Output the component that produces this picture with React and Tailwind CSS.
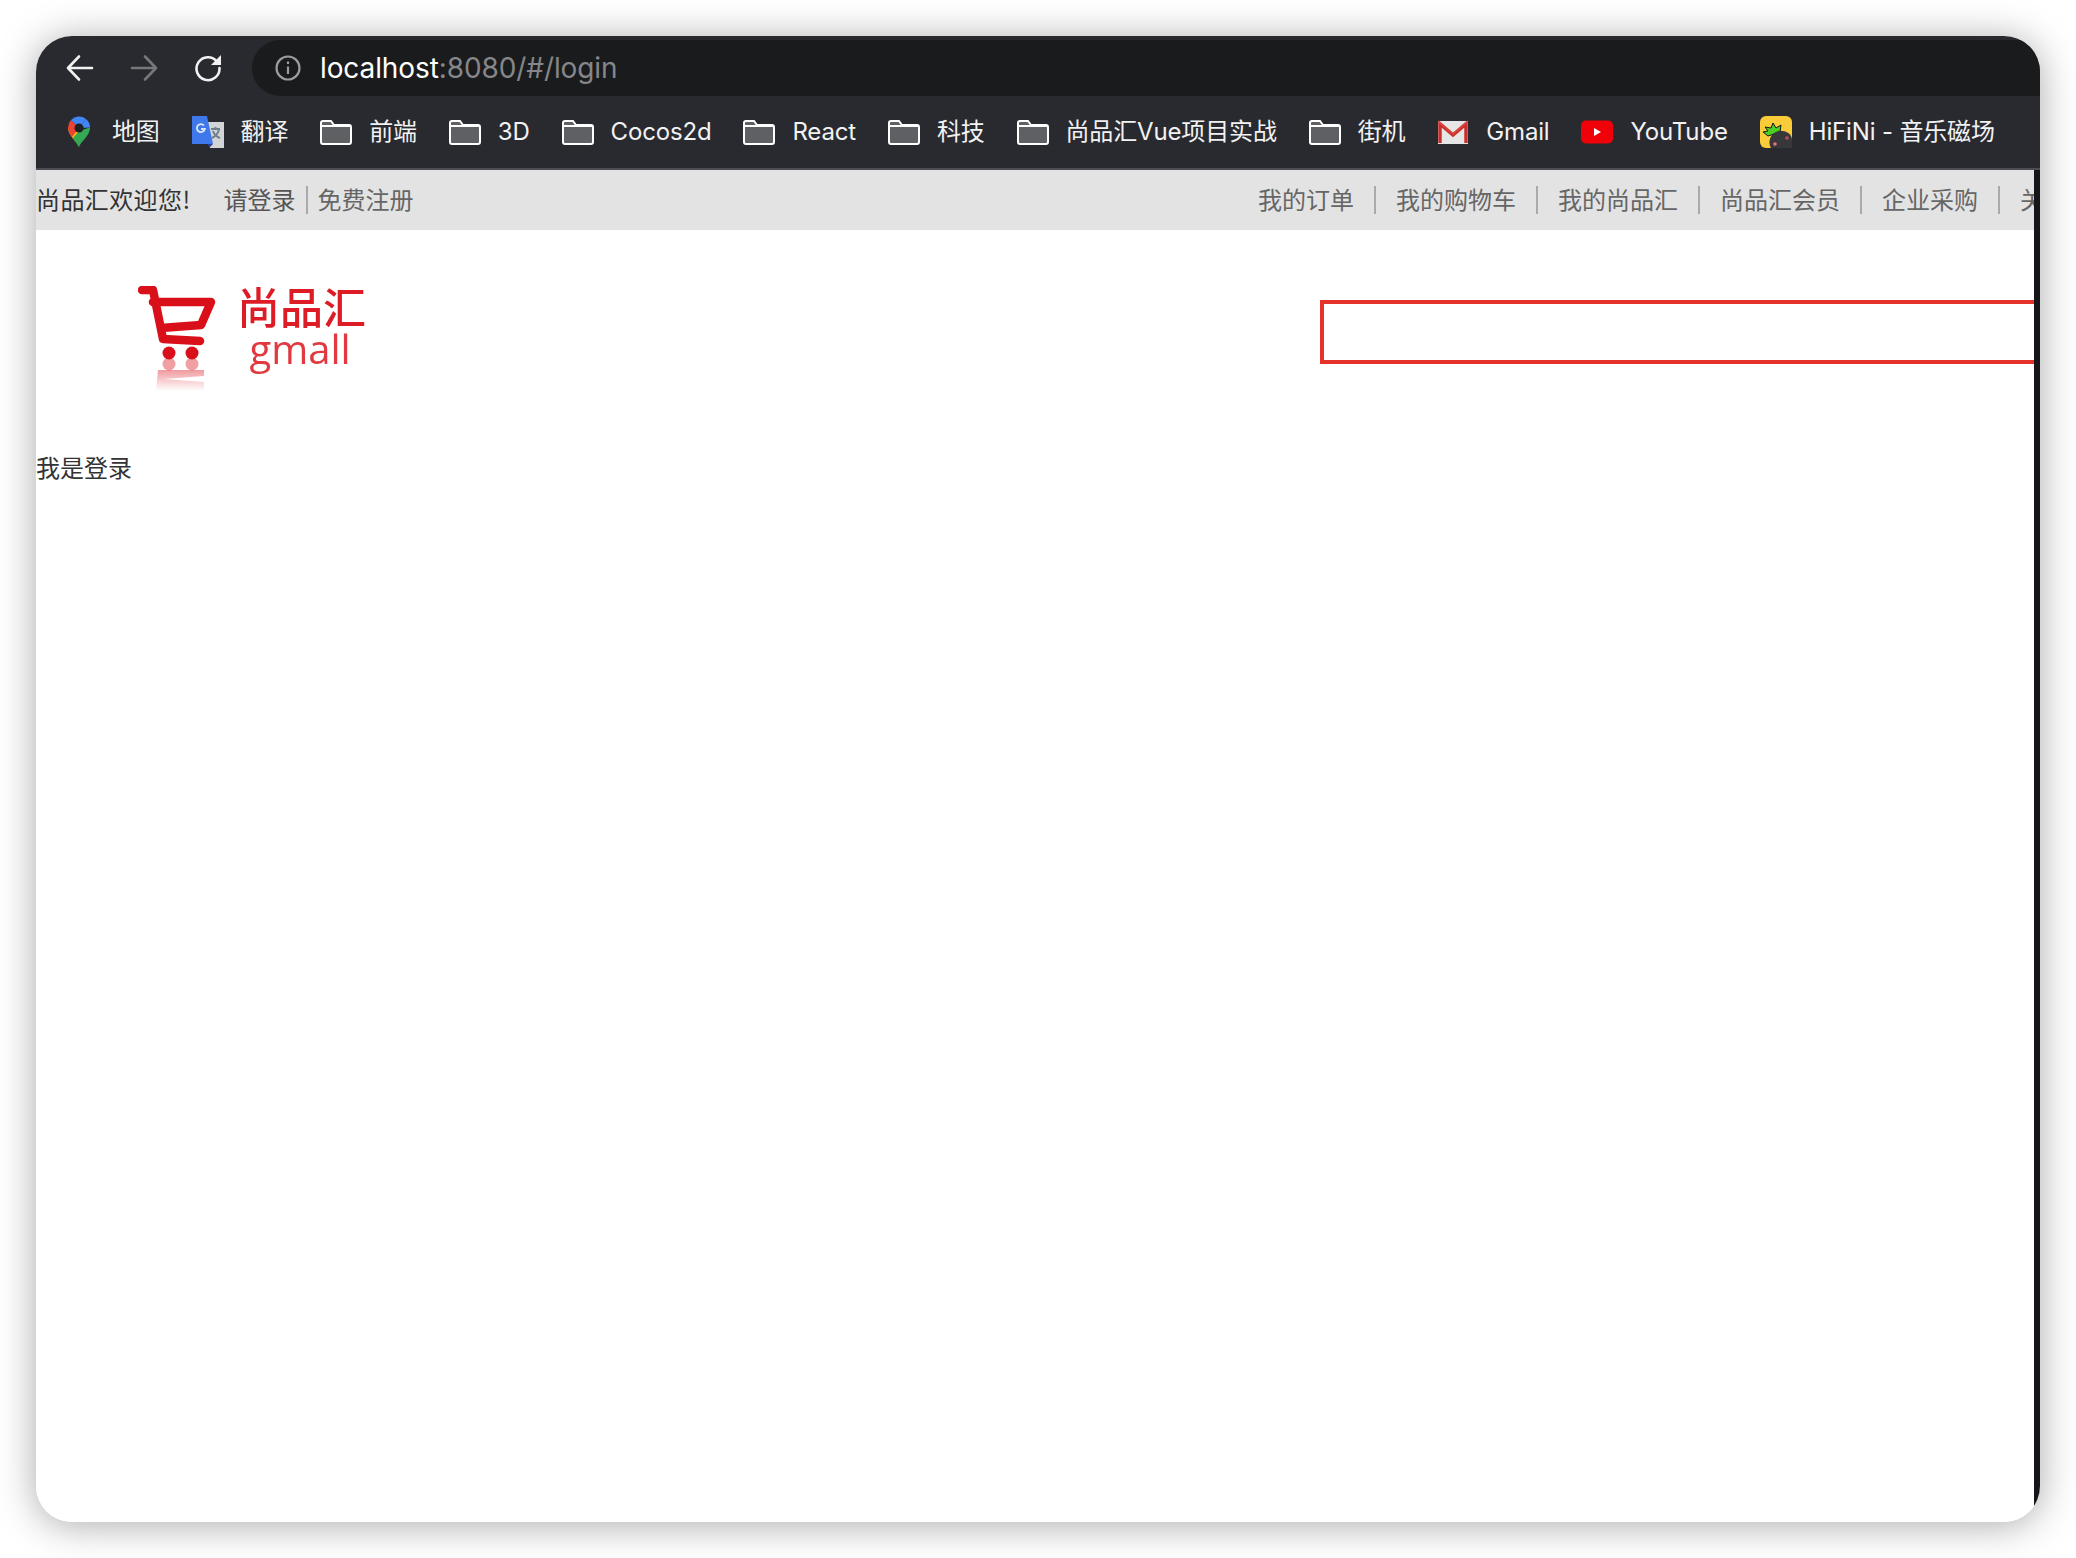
const sans = "font-['Inter','Noto_Sans_CJK_SC',sans-serif]"

function FolderIcon() {
  return (
    <svg width="32" height="26" viewBox="0 0 32 26" fill="none">
      <path d="M1 4a2 2 0 0 1 2-2h8l3 4h15a2 2 0 0 1 2 2v15a2 2 0 0 1-2 2H3a2 2 0 0 1-2-2z" fill="#5f6064" stroke="#fff" strokeWidth="2" />
      <path d="M1 7h30" stroke="#fff" strokeWidth="2" />
    </svg>
  )
}

function MapsIcon() {
  return (
    <svg width="24" height="32" viewBox="0 0 24 32">
      <path d="M12 31C10 25 1 20 1 11.500L12 15z" fill="#fbbc04" />
      <path d="M12 31c2-6 11-11 11-19.500L12 15l-6 7z" fill="#34a853" />
      <path d="M1 11.500A11 11 0 0 1 4 4l8 8-7 9c-2-3-4-6-4-9.500z" fill="#ea4335" />
      <path d="M4 4a11 11 0 0 1 15-1l-7 9z" fill="#4285f4" />
      <path d="M19 3a11 11 0 0 1 4 8.500L12 12z" fill="#4285f4" />
      <circle cx="12" cy="12" r="4.500" fill="#1f2022" />
    </svg>
  )
}

function TranslateIcon() {
  return (
    <svg width="32" height="32" viewBox="0 0 32 32">
      <path d="M14 6h18v26H18z" fill="#d3d4d6" />
      <path d="M19 13h9M23.500 11v3M20 22c4-2 6-5 7-8M21 15c1 3 4 6 7 7" stroke="#6f7f8c" strokeWidth="2" fill="none" />
      <path d="M0 0h15l6 28H0z" fill="#3f78ea" />
      <path d="M15 28h6l-3 3z" fill="#2b3f9e" />
      <path d="M12 9.500a4 4 0 1 0 .8 3.500H9" stroke="#dbe6fb" strokeWidth="1.800" fill="none" />
    </svg>
  )
}

function GmailIcon() {
  return (
    <svg width="32" height="26" viewBox="0 0 32 26">
      <rect x="1" y="2" width="30" height="23" fill="#e6e6e6" />
      <path d="M3 24V5l13 11L29 5v19" fill="none" stroke="#c9302c" strokeWidth="3.500" />
      <path d="M2 3l14 12L30 3" fill="none" stroke="#d9413b" strokeWidth="2" />
    </svg>
  )
}

function YoutubeIcon() {
  return (
    <svg width="32" height="24" viewBox="0 0 32 24">
      <rect width="32" height="23" y="0.500" rx="5" fill="#f00008" />
      <path d="M13 8l7 4-7 4z" fill="#fff" />
    </svg>
  )
}

function HifiniIcon() {
  return (
    <svg width="32" height="32" viewBox="0 0 32 32">
      <rect width="32" height="32" rx="6" fill="#fbcc3a" />
      <path d="M8 20L3 16l5-1-3-4 6 1 2-5 3 5 5-3-1 7z" fill="#4ad024" stroke="#141414" strokeWidth="1" />
      <path d="M11 32a13 12 0 0 1 7-17c6-1 14 2 14 9v8z" fill="#38383a" />
      <circle cx="15" cy="28" r="1.800" fill="#e8707a" />
      <circle cx="27" cy="22" r="1.800" fill="#b85058" />
    </svg>
  )
}

const bookmarks = [
  { label: "地图", icon: <MapsIcon /> },
  { label: "翻译", icon: <TranslateIcon /> },
  { label: "前端", icon: <FolderIcon /> },
  { label: "3D", icon: <FolderIcon /> },
  { label: "Cocos2d", icon: <FolderIcon /> },
  { label: "React", icon: <FolderIcon /> },
  { label: "科技", icon: <FolderIcon /> },
  { label: "尚品汇Vue项目实战", icon: <FolderIcon /> },
  { label: "街机", icon: <FolderIcon /> },
  { label: "Gmail", icon: <GmailIcon /> },
  { label: "YouTube", icon: <YoutubeIcon /> },
  { label: "HiFiNi - 音乐磁场", icon: <HifiniIcon /> },
]

const topLinks = ["我的订单", "我的购物车", "我的尚品汇", "尚品汇会员", "企业采购", "关于尚品汇"]

function BrowserBar() {
  return (
    <div className={`bg-[#292a2f] pt-[4px] ${sans}`}>
      <div className="flex items-center">
        <div className="flex w-[216px] shrink-0 items-center gap-[36px] pl-[30px]">
          <svg width="28" height="28" viewBox="0 0 28 28" fill="none" stroke="#f1f1f2" strokeWidth="2.600" strokeLinecap="round" strokeLinejoin="round">
            <path d="M26 14H2M13 2.500L2 14l11 11.500" />
          </svg>
          <svg width="28" height="28" viewBox="0 0 28 28" fill="none" stroke="#77787b" strokeWidth="2.600" strokeLinecap="round" strokeLinejoin="round">
            <path d="M2 14h24M15 2.500L26 14 15 25.500" />
          </svg>
          <svg width="28" height="28" viewBox="0 0 28 28" fill="none">
            <path d="M23 7.500A11.500 11.500 0 1 0 25.500 14" stroke="#f1f1f2" strokeWidth="2.600" strokeLinecap="round" />
            <path d="M27 1v10H17z" fill="#f1f1f2" />
          </svg>
        </div>
        <div className="flex h-[56px] flex-1 items-center rounded-l-[28px] bg-[#1a1b1d] pl-[23px]">
          <svg width="26" height="26" viewBox="0 0 26 26" fill="none" stroke="#9b9c9f" strokeWidth="2.200">
            <circle cx="13" cy="13" r="11.500" />
            <path d="M13 11.500v7.500" />
            <path d="M13 6.500v2.500" />
          </svg>
          <span className="ml-[19px] text-[28px] leading-[36px] tracking-[-0.1px] text-white">
            localhost<span className="text-[#85868a]">:8080/#/login</span>
          </span>
        </div>
      </div>
      <div className="box-content flex h-[72px] items-center gap-[31.9px] border-b-2 border-[#4d4e53] pl-[27px]">
        {bookmarks.map((b) => (
          <div key={b.label} className="flex shrink-0 items-center gap-[17px]">
            <div className="flex w-[32px] justify-center">{b.icon}</div>
            <span className="whitespace-nowrap text-[24px] leading-[32px] tracking-[-0.15px] text-[#f2f2f3]">{b.label}</span>
          </div>
        ))}
      </div>
    </div>
  )
}

function TopBand() {
  return (
    <div className="flex h-[60px] items-center bg-[#e3e3e3] text-[24px] leading-[26px] font-['Noto_Sans_CJK_SC','Noto_Sans',sans-serif]">
      <div className="flex w-[1202px] shrink-0 items-center">
        <span className="pb-[2px] tracking-[0.4px] text-[#333]">尚品汇欢迎您!</span>
        <span className="ml-[33px] border-r-2 border-[#aaa] pb-[2px] pr-[10px] text-[#555]">请登录</span>
        <span className="ml-[10px] pb-[2px] text-[#666]">免费注册</span>
      </div>
      {topLinks.map((t) => (
        <span key={t} className="shrink-0 whitespace-nowrap border-r-2 border-[#aaa] px-[20px] pb-[2px] text-[#666]">{t}</span>
      ))}
    </div>
  )
}

function Logo() {
  return (
    <div className="flex w-[228px] shrink-0">
      <svg width="80" height="106" viewBox="0 0 80 106" fill="none" className="blur-[0.5px]">
        <defs>
          <linearGradient id="fade" x1="0" y1="84" x2="0" y2="105" gradientUnits="userSpaceOnUse">
            <stop offset="0" stopColor="#d9101a" stopOpacity="0.42" />
            <stop offset="1" stopColor="#d9101a" stopOpacity="0" />
          </linearGradient>
        </defs>
        <path d="M4 4h11l10 49 37 2M15 16h58l-10 23-40 3" stroke="#d9101a" strokeWidth="8.500" strokeLinecap="round" strokeLinejoin="round" />
        <circle cx="31" cy="67" r="6.500" fill="#d9101a" />
        <circle cx="54" cy="67" r="6.500" fill="#d9101a" />
        <circle cx="31" cy="78" r="6.500" fill="#d9101a" opacity="0.4" />
        <circle cx="54" cy="78" r="6.500" fill="#d9101a" opacity="0.4" />
        <path d="M20 84h46v6l-40 3 40 3v9H18z" fill="url(#fade)" />
      </svg>
      <div className="-mt-[4px] ml-[19px] flex w-[129px] flex-col items-center blur-[0.4px]">
        <span className="whitespace-nowrap text-[43px] font-medium leading-[46px] text-[#dd1c26] font-['Noto_Sans_CJK_SC',sans-serif]">尚品汇</span>
        <span className="text-[40px] font-medium leading-[42px] pr-[3px] text-[#e03a40] font-['Open_Sans',sans-serif]">gmall</span>
      </div>
    </div>
  )
}

export default function App() {
  return (
    <div className="h-[1558px] w-[2076px] overflow-hidden bg-white pl-[36px] pt-[36px]">
      <div className="flex h-[1486px] w-[2004px] flex-col overflow-hidden rounded-[36px] bg-white shadow-[0_3px_38px_rgba(0,0,0,0.34)]">
        <BrowserBar />
        <div className="flex min-h-0 flex-1">
          <main className="min-w-0 flex-1 overflow-hidden bg-white">
            <TopBand />
            <div className="flex pl-[102px] pt-[56px]">
              <Logo />
              <div className="ml-[954px] mt-[14px] h-[64px] w-[800px] shrink-0 border-4 border-[#e4332a]" />
            </div>
            <p className="mt-[61px] text-[24px] leading-[28px] text-[#333] font-['Noto_Sans_CJK_SC',sans-serif]">我是登录</p>
          </main>
          <div className="w-[6px] shrink-0 bg-[#14161a]" />
        </div>
      </div>
    </div>
  )
}
